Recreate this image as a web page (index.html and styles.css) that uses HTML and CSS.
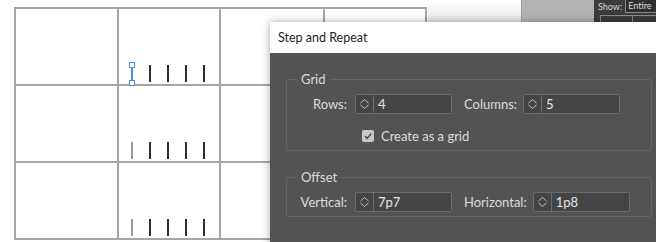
FILE: index.html
```html
<!DOCTYPE html>
<html lang="en">
<head>
    <meta charset="UTF-8">
    <meta name="viewport" content="width=device-width, initial-scale=1.0">
    <title>Step and Repeat</title>
    <link rel="stylesheet" href="styles.css">
</head>
<body>
    <div class="workspace">
        <div class="pasteboard">
            <div class="page">
                <div class="cell"></div>
                <div class="cell ticks">
                    <span class="tick selected"></span>
                    <span class="tick"></span>
                    <span class="tick"></span>
                    <span class="tick"></span>
                    <span class="tick"></span>
                </div>
                <div class="cell"></div>
                <div class="cell"></div>

                <div class="cell"></div>
                <div class="cell ticks">
                    <span class="tick light"></span>
                    <span class="tick"></span>
                    <span class="tick"></span>
                    <span class="tick"></span>
                    <span class="tick"></span>
                </div>
                <div class="cell"></div>
                <div class="cell"></div>

                <div class="cell"></div>
                <div class="cell ticks">
                    <span class="tick light"></span>
                    <span class="tick"></span>
                    <span class="tick"></span>
                    <span class="tick"></span>
                    <span class="tick"></span>
                </div>
                <div class="cell"></div>
                <div class="cell"></div>
            </div>
            <div class="spread-edge"></div>
        </div>
        <div class="gutter"></div>
        <div class="panel">
            <div class="panel-bar">
                <span>Show:</span>
                <span class="panel-select">Entire</span>
            </div>
            <div class="panel-cols">
                <span></span>
                <span></span>
            </div>
        </div>

        <div class="dialog">
            <div class="dialog-title">Step and Repeat</div>
            <div class="dialog-body">
                <fieldset class="group">
                    <legend>Grid</legend>
                    <div class="field-row">
                        <label class="field-label">Rows:</label>
                        <div class="spinner">
                            <span class="arrows">
                                <svg width="17" height="18" viewBox="0 0 17 18"><path d="M4.5 8 L8.5 4.5 L12.5 8 M4.5 10 L8.5 13.5 L12.5 10" fill="none" stroke="#bdbdbd" stroke-width="1"/></svg>
                            </span>
                            <span class="value">4</span>
                        </div>
                        <label class="field-label second">Columns:</label>
                        <div class="spinner">
                            <span class="arrows">
                                <svg width="17" height="18" viewBox="0 0 17 18"><path d="M4.5 8 L8.5 4.5 L12.5 8 M4.5 10 L8.5 13.5 L12.5 10" fill="none" stroke="#bdbdbd" stroke-width="1"/></svg>
                            </span>
                            <span class="value">5</span>
                        </div>
                    </div>
                    <div class="check-row">
                        <span class="checkbox">
                            <svg width="12" height="12" viewBox="0 0 12 12"><path d="M3 6.2 L5.1 8.3 L9.2 3.8" fill="none" stroke="#4f4f4f" stroke-width="1.6"/></svg>
                        </span>
                        <span>Create as a grid</span>
                    </div>
                </fieldset>

                <fieldset class="group offset">
                    <legend>Offset</legend>
                    <div class="field-row">
                        <label class="field-label">Vertical:</label>
                        <div class="spinner">
                            <span class="arrows">
                                <svg width="17" height="18" viewBox="0 0 17 18"><path d="M4.5 8 L8.5 4.5 L12.5 8 M4.5 10 L8.5 13.5 L12.5 10" fill="none" stroke="#bdbdbd" stroke-width="1"/></svg>
                            </span>
                            <span class="value">7p7</span>
                        </div>
                        <label class="field-label second">Horizontal:</label>
                        <div class="spinner">
                            <span class="arrows">
                                <svg width="17" height="18" viewBox="0 0 17 18"><path d="M4.5 8 L8.5 4.5 L12.5 8 M4.5 10 L8.5 13.5 L12.5 10" fill="none" stroke="#bdbdbd" stroke-width="1"/></svg>
                            </span>
                            <span class="value">1p8</span>
                        </div>
                    </div>
                </fieldset>
            </div>
        </div>
    </div>
</body>
</html>
```

FILE: styles.css
```css
body {
    margin: 0;
    background-color: #ffffff;
    font-family: 'Lato', 'Liberation Sans', sans-serif;
    overflow: hidden;
}
.workspace {
    position: relative;
    display: flex;
    width: 656px;
    height: 242px;
    overflow: hidden;
}
.pasteboard {
    display: flex;
    flex-shrink: 0;
    width: 521px;
    background-color: #ffffff;
}
.page {
    display: grid;
    flex-shrink: 0;
    grid-template-columns: 103px 102px 104px 102px;
    grid-auto-rows: 77px;
    margin: 7px 0 0 14px;
    border-left: 2px solid #a6a6a6;
    border-top: 2px solid #a6a6a6;
    align-self: flex-start;
}
.cell {
    border-right: 2px solid #a6a6a6;
    border-bottom: 2px solid #a6a6a6;
}
.ticks {
    display: flex;
    align-items: flex-end;
    gap: 16px;
    padding: 0 0 2px 12px;
}
.tick {
    position: relative;
    width: 2px;
    height: 17px;
    background-color: #2e2e2e;
}
.tick.light {
    background-color: #9a9a9a;
}
.tick.selected {
    background-color: #4a8ee0;
}
.tick.selected::before,
.tick.selected::after {
    content: '';
    position: absolute;
    left: -2px;
    width: 4px;
    height: 4px;
    border: 1px solid #4a8ee0;
    background-color: #ffffff;
}
.tick.selected::before {
    top: -3px;
}
.tick.selected::after {
    bottom: -4px;
}
.spread-edge {
    flex: 1;
    margin-left: 1px;
    background: linear-gradient(#ffffff 0, #f6f6f6 8px, #e6e6e6 24px);
}
.gutter {
    flex-shrink: 0;
    width: 72px;
    background-color: #b3b3b3;
    border-left: 1px solid #9c9c9c;
}
.panel {
    flex: 1;
    background-color: #3c3c3c;
    color: #d6d6d6;
    font-size: 9px;
}
.panel-bar {
    display: flex;
    align-items: center;
    height: 13px;
    padding-left: 4px;
    gap: 3px;
}
.panel-select {
    flex: 1;
    height: 12px;
    line-height: 12px;
    padding-left: 2px;
    border: 1px solid #8a8a8a;
    border-top: none;
    border-right: none;
    background-color: #303030;
}
.panel-cols {
    display: flex;
    margin: 2px 0 0 6px;
    height: 8px;
    border-top: 1px solid #8c8c8c;
}
.panel-cols span {
    width: 31px;
    border-left: 1px solid #8c8c8c;
}
.dialog {
    position: absolute;
    left: 270px;
    top: 22px;
    width: 398px;
    height: 240px;
    box-shadow: 0 0 8px rgba(0, 0, 0, 0.35);
}
.dialog-title {
    height: 31px;
    line-height: 31px;
    padding-left: 8px;
    background-color: #ffffff;
    color: #1e1e1e;
    font-size: 12.5px;
}
.dialog-body {
    height: 209px;
    padding: 18px 16px 0;
    background-color: #535353;
    color: #dcdcdc;
    font-size: 13px;
    box-sizing: border-box;
}
.group {
    margin: 0;
    padding: 7px 0 6px;
    border: 1px solid #666666;
    border-radius: 3px;
}
.group legend {
    margin-left: 10px;
    padding: 0 4px;
    line-height: 16px;
}
.group.offset {
    margin-top: 18px;
    padding-bottom: 4px;
}
.field-row {
    display: flex;
    align-items: center;
    height: 20px;
}
.field-label {
    width: 60px;
    padding-right: 8px;
    text-align: right;
}
.field-label.second {
    width: auto;
    padding-right: 6px;
    margin-left: 12px;
}
.spinner {
    display: flex;
    align-items: center;
    width: 97px;
    height: 20px;
    box-sizing: border-box;
    border: 1px solid #6c6c6c;
    border-radius: 2px;
    background-color: #454545;
}
.arrows {
    display: flex;
    width: 17px;
    height: 18px;
    border-right: 1px solid #6c6c6c;
}
.value {
    padding-left: 4px;
    color: #e6e6e6;
}
.check-row {
    display: flex;
    align-items: center;
    height: 16px;
    margin-top: 14px;
    padding-left: 75px;
}
.checkbox {
    display: flex;
    width: 12px;
    height: 12px;
    margin-right: 7px;
    border-radius: 2px;
    background-color: #c9c9c9;
}
```
